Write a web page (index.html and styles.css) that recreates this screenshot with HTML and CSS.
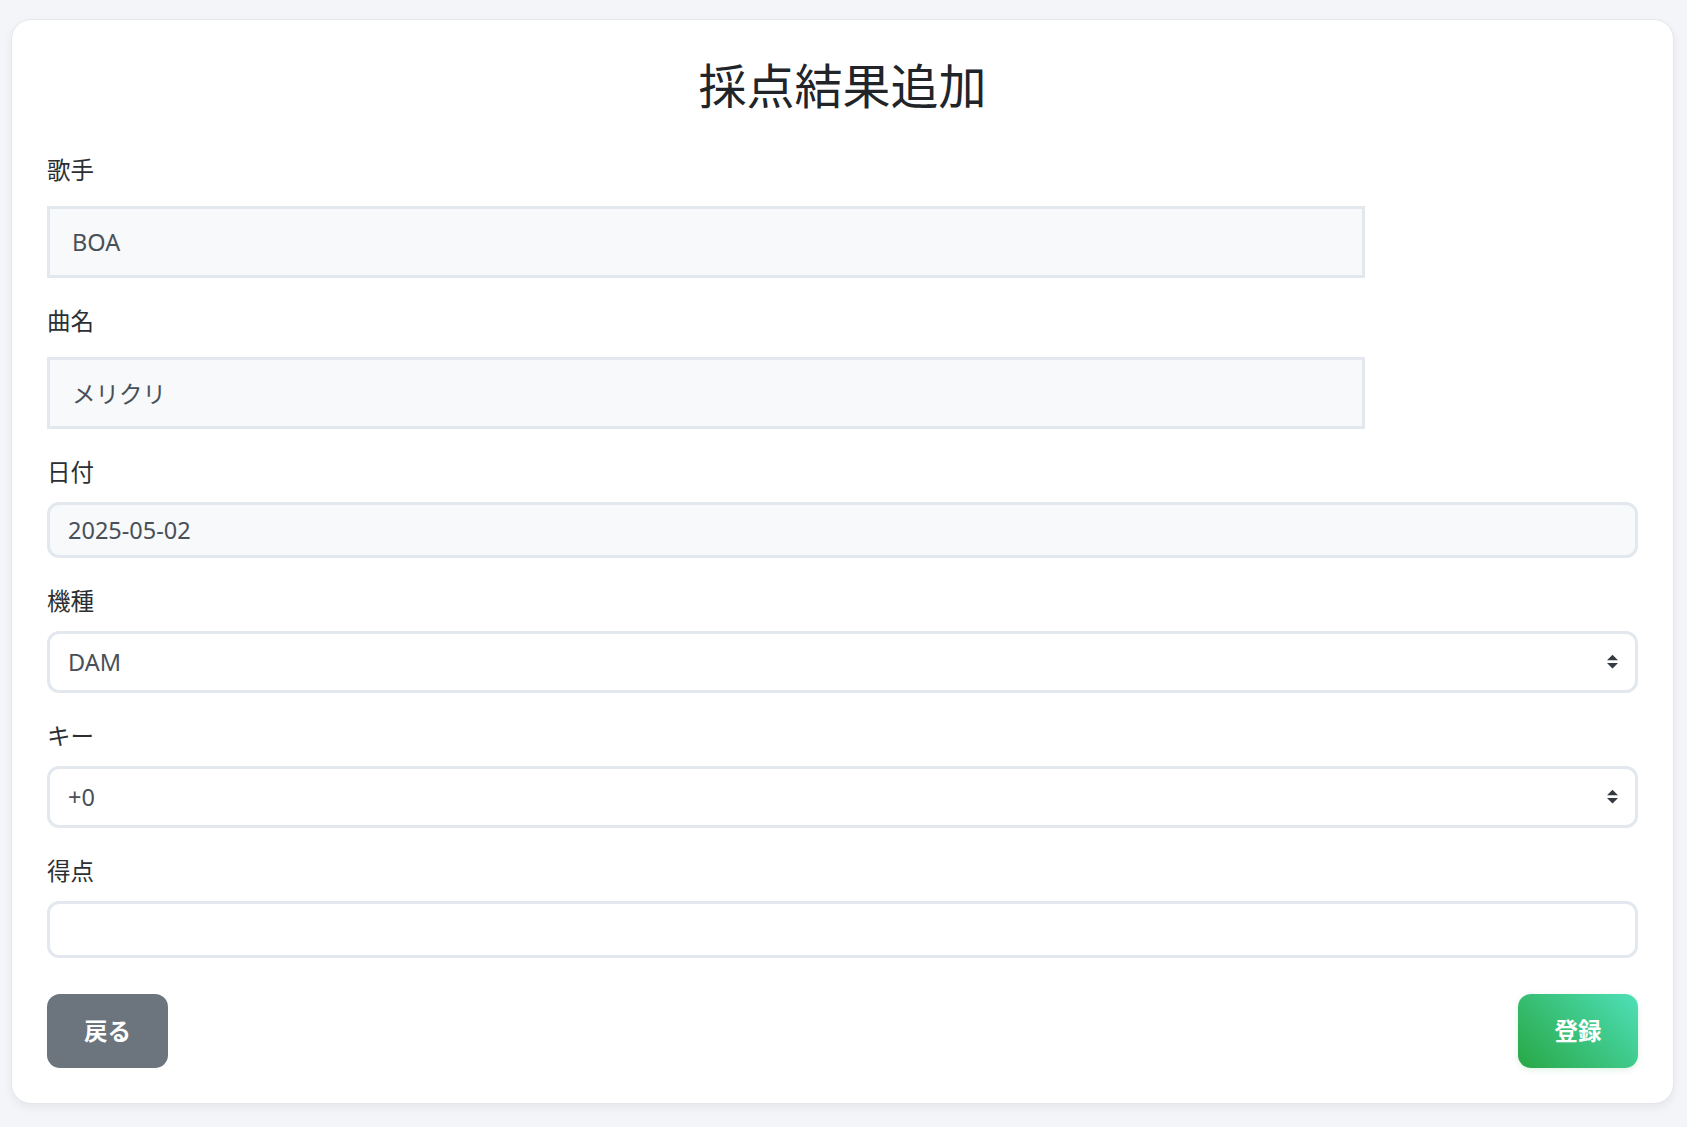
FILE: index.html
```html
<!DOCTYPE html>
<html lang="ja">

<head>
  <meta charset="UTF-8">
  <title>採点結果追加</title>
  <link rel="stylesheet" href="styles.css">
</head>

<body>

  <div class="card">
    <h1 class="title">採点結果追加</h1>

    <form class="score-form">
      <div class="field field-static">
        <label>歌手</label>
        <input class="input input-static" type="text" value="BOA" readonly>
      </div>

      <div class="field field-static">
        <label>曲名</label>
        <input class="input input-static" type="text" value="メリクリ" readonly>
      </div>

      <div class="field">
        <label>日付</label>
        <input class="input input-date" type="text" value="2025-05-02" readonly>
      </div>

      <div class="field">
        <label>機種</label>
        <div class="select-wrap">
          <select class="input input-select">
            <option>DAM</option>
            <option>JOYSOUND</option>
          </select>
          <svg class="select-arrow" viewBox="0 0 4 5" width="11" height="15">
            <path d="M2 0L0 2h4zm0 5L0 3h4z" fill="#343a40" />
          </svg>
        </div>
      </div>

      <div class="field">
        <label>キー</label>
        <div class="select-wrap">
          <select class="input input-select">
            <option>+0</option>
            <option>+1</option>
            <option>-1</option>
          </select>
          <svg class="select-arrow" viewBox="0 0 4 5" width="11" height="15">
            <path d="M2 0L0 2h4zm0 5L0 3h4z" fill="#343a40" />
          </svg>
        </div>
      </div>

      <div class="field">
        <label>得点</label>
        <input class="input input-score" type="text">
      </div>

      <div class="actions">
        <button type="button" class="btn btn-back">戻る</button>
        <button type="submit" class="btn btn-submit">登録</button>
      </div>
    </form>
  </div>

</body>

</html>
```

FILE: styles.css
```css
body {
  margin: 0;
  padding: 19px 13px 22px 11px;
  background-color: #f4f5f9;
  color: #2b2f33;
  font-family: 'Noto Sans', 'Noto Sans CJK JP', sans-serif;
  font-size: 23.5px;
}

.card {
  background-color: #fff;
  border: 1px solid #e4e6eb;
  border-radius: 20px;
  box-shadow: 0 4px 10px rgba(0, 0, 0, 0.06);
  padding: 38px 35px 35px 35px;
}

.title {
  margin: 0 0 40px 0;
  font-size: 48px;
  line-height: 56px;
  font-weight: 400;
  text-align: center;
  color: #212529;
}

.field {
  margin-bottom: 27px;
}

.field label {
  display: block;
  line-height: 33px;
  margin-bottom: 13px;
}

.field-static label {
  margin-bottom: 19px;
}

.input {
  display: block;
  box-sizing: border-box;
  width: 100%;
  margin: 0;
  border: 3px solid #e2e8ee;
  border-radius: 12px;
  background-color: #fff;
  color: #495057;
  font-family: inherit;
  font-size: 23.5px;
  padding: 0 18px;
  outline: none;
}

.input-static {
  max-width: 1318px;
  height: 72px;
  border-radius: 0;
  padding: 0 22px;
  background-color: #f7f9fa;
}

.input-date {
  height: 56px;
  background-color: #f7f9fa;
}

.select-wrap {
  position: relative;
}

.input-select {
  height: 62px;
  appearance: none;
  -webkit-appearance: none;
}

.select-arrow {
  position: absolute;
  right: 20px;
  top: 23px;
  pointer-events: none;
}

.input-score {
  height: 57px;
}

.actions {
  display: flex;
  justify-content: space-between;
  margin-top: 36px;
}

.btn {
  border: none;
  border-radius: 13px;
  color: #fff;
  font-family: inherit;
  font-size: 23.5px;
  font-weight: 700;
  line-height: 33px;
  height: 74px;
  padding: 0 37px;
}

.btn-back {
  background-color: #6c757d;
}

.btn-submit {
  width: 120px;
  padding: 0;
  background: linear-gradient(45deg, #28a745, #4ee0b8);
  box-shadow: 0 2px 6px rgba(40, 167, 69, 0.15);
}
```
